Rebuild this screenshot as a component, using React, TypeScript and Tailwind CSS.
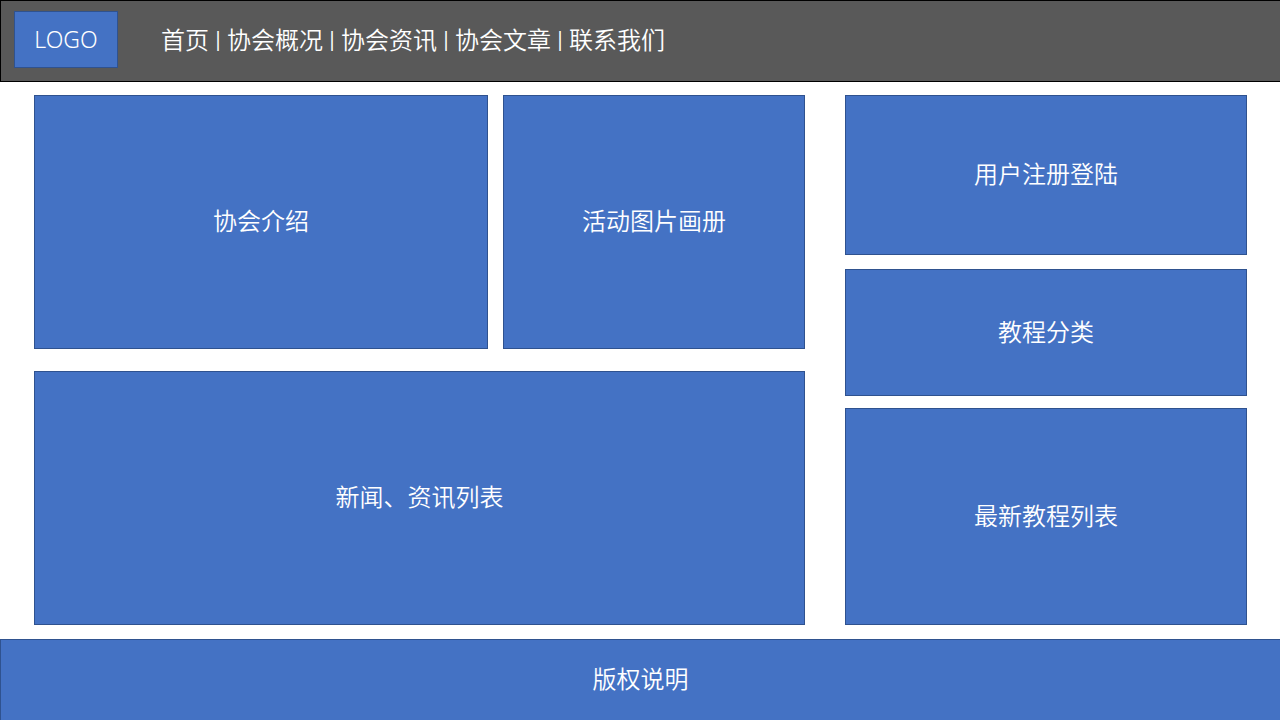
import React from "react";

const navItems = ["首页", "协会概况", "协会资讯", "协会文章", "联系我们"];

function Panel({ title, className }: { title: string; className: string }) {
    return (
        <section className={`flex items-center justify-center border border-[#2f528f] bg-[#4472c4] pb-1 ${className}`}>
            <h2>{title}</h2>
        </section>
    );
}

export default function App() {
    return (
        <div className="flex min-h-screen flex-col bg-white font-['Noto_Sans_CJK_SC',sans-serif] text-2xl font-[350] text-white">
            <header className="flex h-[82px] items-center border border-r-0 border-black bg-[#595959] pb-1 pl-[13px]">
                <a
                    href="#"
                    className="flex h-[57px] w-[104px] items-center justify-center border border-[#2f528f] bg-[#4472c4] font-['Noto_Sans','Noto_Sans_CJK_SC',sans-serif] text-[23px] font-light"
                >
                    LOGO
                </a>
                <nav className="ml-[43px] flex">
                    {navItems.map((item, i) => (
                        <React.Fragment key={item}>
                            {i > 0 && <span className="w-[18px] text-center font-['Noto_Sans',sans-serif] text-xl leading-8 font-normal">|</span>}
                            <a href="#">{item}</a>
                        </React.Fragment>
                    ))}
                </nav>
            </header>

            <main className="flex flex-1 gap-10 pt-[13px] pr-[33px] pb-[14px] pl-[34px]">
                <div className="grid flex-[771] grid-rows-2 gap-[22px]">
                    <div className="flex gap-[15px]">
                        <Panel title="协会介绍" className="flex-[452]" />
                        <Panel title="活动图片画册" className="flex-[300]" />
                    </div>
                    <Panel title="新闻、资讯列表" className="" />
                </div>
                <div className="flex flex-[402] flex-col">
                    <Panel title="用户注册登陆" className="mb-[14px] h-40" />
                    <Panel title="教程分类" className="mb-3 h-[127px]" />
                    <Panel title="最新教程列表" className="flex-1" />
                </div>
            </main>

            <footer className="flex h-[81px] items-center justify-center border border-r-0 border-b-0 border-[#2f528f] bg-[#4472c4] pb-1">
                版权说明
            </footer>
        </div>
    );
}
